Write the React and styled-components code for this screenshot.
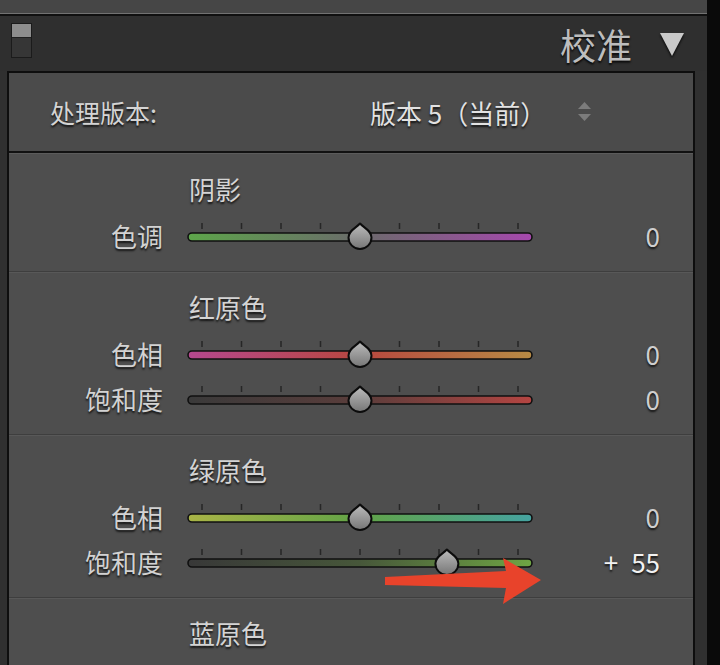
import React from "react";
import styled, { createGlobalStyle } from "styled-components";

const GlobalStyle = createGlobalStyle`
  html, body {
    margin: 0;
    padding: 0;
    background: #0a0a0a;
    overflow: hidden;
  }
  body {
    font-family: "Noto Sans CJK SC", "Noto Sans", sans-serif;
  }
`;

const Page = styled.div`
  display: flex;
  width: 720px;
  height: 665px;
  overflow: hidden;
  background: #0a0a0a;
`;

const Main = styled.div`
  width: 707px;
  display: flex;
  flex-direction: column;
  overflow: hidden;
  background: #303030;
`;

const TopBar = styled.div`
  flex-shrink: 0;
  height: 13px;
  background: #464646;
  border-bottom: 1px solid #727272;
  box-shadow: 0 2px 0 #101010;
  margin-bottom: 2px;
`;

const Header = styled.div`
  flex-shrink: 0;
  height: 55px;
  display: flex;
  align-items: center;
  padding: 0 23px 0 11px;
  background: #2f2f2f;
`;

const Toggle = styled.div`
  width: 19px;
  height: 33px;
  border: 1px solid #1b1b1b;
  align-self: flex-start;
  margin-top: 7px;
  display: flex;
  flex-direction: column;
  background: #363636;
`;

const ToggleTop = styled.div`
  height: 13px;
  background: #8d8d8d;
  border-bottom: 1px solid #1f1f1f;
`;

const HeaderTitle = styled.div`
  margin-left: auto;
  font-size: 36px;
  line-height: 40px;
  color: #bdbdbd;
  text-shadow: 0 2px 2px rgba(0, 0, 0, 0.8);
`;

const Caret = styled.svg`
  margin-left: 28px;
  margin-top: 2px;
  filter: drop-shadow(0 2px 1px rgba(0, 0, 0, 0.8));
`;

const Panel = styled.div`
  flex-shrink: 0;
  position: relative;
  margin-left: 7px;
  width: 684px;
  min-height: 600px;
  border: 2px solid #0e0e0e;
  border-bottom: none;
  background: #4e4e4e;
`;

const ProcessRow = styled.div`
  height: 78px;
  display: flex;
  align-items: center;
  padding-left: 41px;
  background: #4b4b4b;
  border-bottom: 2px solid #111;
  font-size: 25px;
  color: #d4d4d4;
  text-shadow: 0 2px 2px rgba(0, 0, 0, 0.75);
`;

const ProcessLabel = styled.span`
  width: 320px;
`;

const ProcessValue = styled.span`
  font-size: 26px;
  color: #e2e2e2;
`;

const Stepper = styled.svg`
  margin-left: 32px;
`;

const Section = styled.div`
  padding: 18px 0 13px;
  border-top: ${(p) => (p.$first ? "1px solid #5b5b5b" : "1px solid #3e3e3e")};
  box-shadow: ${(p) => (p.$first ? "none" : "inset 0 1px 0 #585858")};
`;

const SectionTitle = styled.div`
  margin-left: 180px;
  margin-bottom: 7px;
  height: 34px;
  line-height: 34px;
  font-size: 26px;
  color: #d4d4d4;
  text-shadow: 0 2px 2px rgba(0, 0, 0, 0.75);
`;

const Row = styled.div`
  height: 45px;
  display: grid;
  grid-template-columns: 154px 346px 103px;
  column-gap: 24px;
  align-items: center;
`;

const RowLabel = styled.div`
  text-align: right;
  font-size: 26px;
  line-height: 34px;
  color: #d2d2d2;
  text-shadow: 0 2px 2px rgba(0, 0, 0, 0.75);
`;

const RowValue = styled.div`
  text-align: right;
  font-size: 26px;
  line-height: 34px;
  color: ${(p) => (p.$active ? "#f2f2f2" : "#cfcfcf")};
  text-shadow: 0 2px 2px rgba(0, 0, 0, 0.75);
`;

const SliderSvg = styled.svg`
  display: block;
  margin-top: 3px;
`;

const Arrow = styled.svg`
  position: absolute;
  left: 376px;
  top: 483px;
`;

const TICKS = [15, 54.5, 94, 133.5, 173, 212.5, 252, 291.5, 331];

const Slider = ({ id, stops, value }) => {
  const cx = 173 + (value / 100) * 158;
  return (
    <SliderSvg width="346" height="30" viewBox="0 0 346 30">
      <defs>
        <linearGradient id={`track-${id}`} x1="0" x2="1" y1="0" y2="0">
          {stops.map(([o, c]) => (
            <stop key={o} offset={o} stopColor={c} />
          ))}
        </linearGradient>
        <linearGradient id={`thumb-${id}`} x1="0" x2="0" y1="0" y2="1">
          <stop offset="0" stopColor="#bcbcbc" />
          <stop offset="1" stopColor="#767676" />
        </linearGradient>
      </defs>
      {TICKS.map((x) => (
        <rect key={x} x={x - 0.75} y="1" width="1.5" height="6" fill="#262626" />
      ))}
      <rect
        x="1"
        y="11"
        width="344"
        height="8"
        rx="4"
        fill={`url(#track-${id})`}
        stroke="#101010"
        strokeWidth="1.6"
      />
      <path
        d={`M ${cx} 1.5 C ${cx + 4} 6, ${cx + 11.5} 8.5, ${cx + 11.5} 15.5 A 11.5 11.5 0 0 1 ${cx - 11.5} 15.5 C ${cx - 11.5} 8.5, ${cx - 4} 6, ${cx} 1.5 Z`}
        fill={`url(#thumb-${id})`}
        stroke="#0c0c0c"
        strokeWidth="2"
        strokeLinejoin="round"
      />
    </SliderSvg>
  );
};

const sections = [
  {
    title: "阴影",
    rows: [
      {
        label: "色调",
        value: 0,
        stops: [
          [0, "#5da64a"],
          [0.5, "#6b6b6b"],
          [1, "#a648ad"],
        ],
      },
    ],
  },
  {
    title: "红原色",
    rows: [
      {
        label: "色相",
        value: 0,
        stops: [
          [0, "#b5488f"],
          [0.5, "#b8473f"],
          [1, "#b88b44"],
        ],
      },
      {
        label: "饱和度",
        value: 0,
        stops: [
          [0, "#3a3a3a"],
          [0.5, "#5a3d3b"],
          [1, "#b54542"],
        ],
      },
    ],
  },
  {
    title: "绿原色",
    rows: [
      {
        label: "色相",
        value: 0,
        stops: [
          [0, "#a9b446"],
          [0.5, "#62a447"],
          [1, "#45a3a0"],
        ],
      },
      {
        label: "饱和度",
        value: 55,
        stops: [
          [0, "#383838"],
          [0.5, "#47573a"],
          [1, "#6fa544"],
        ],
      },
    ],
  },
  { title: "蓝原色", rows: [] },
];

const formatValue = (v) => (v > 0 ? `+\u2002${v}` : `${v}`);

const App = () => {
  return (
    <Page>
      <GlobalStyle />
      <Main>
        <TopBar />
        <Header>
          <Toggle>
            <ToggleTop />
          </Toggle>
          <HeaderTitle>校准</HeaderTitle>
          <Caret width="24" height="23" viewBox="0 0 24 23">
            <polygon points="0,0 24,0 12,23" fill="#c9c9c9" />
          </Caret>
        </Header>
        <Panel>
          <ProcessRow>
            <ProcessLabel>处理版本:</ProcessLabel>
            <ProcessValue>版本 5（当前）</ProcessValue>
            <Stepper width="13" height="20" viewBox="0 0 13 20">
              <polygon points="6.5,0 13,7 0,7" fill="#7c7c7c" />
              <polygon points="0,12 13,12 6.5,19" fill="#7c7c7c" />
            </Stepper>
          </ProcessRow>
          {sections.map((s, i) => (
            <Section key={s.title} $first={i === 0}>
              <SectionTitle>{s.title}</SectionTitle>
              {s.rows.map((r, j) => (
                <Row key={r.label}>
                  <RowLabel>{r.label}</RowLabel>
                  <Slider id={`${i}-${j}`} stops={r.stops} value={r.value} />
                  <RowValue $active={r.value !== 0}>{formatValue(r.value)}</RowValue>
                </Row>
              ))}
            </Section>
          ))}
          <Arrow width="160" height="50" viewBox="0 0 160 50">
            <polygon
              points="0,21 121,15 118,2 156,24 118,48 121,32 0,29"
              fill="#e8432b"
            />
          </Arrow>
        </Panel>
      </Main>
    </Page>
  );
};

export default App;
